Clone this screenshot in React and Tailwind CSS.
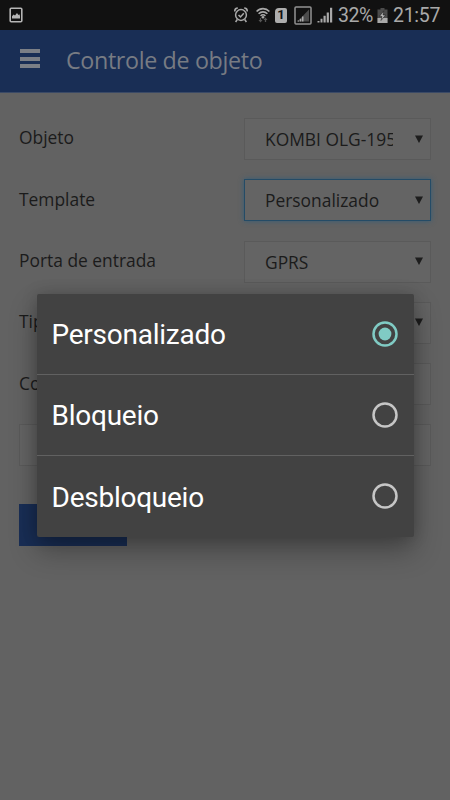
import React, { useState } from 'react';
import clsx from 'clsx';

const OPTIONS = ['Personalizado', 'Bloqueio', 'Desbloqueio'];

const StatusBar = () => (
    <header className="flex h-[30px] shrink-0 items-center bg-[#111111] pl-[9px] pr-[10px] font-['Roboto',sans-serif] text-[#a9a9a9]">
        {/* Picture notification */}
        <svg width="14" height="16" viewBox="0 0 14 16" fill="none">
            <rect x="1.2" y="1.2" width="11.6" height="13.6" rx="1" stroke="#b5b5b5" strokeWidth="1.6" />
            <path d="M3 11.5V9.2L4.6 7.4L6 8.6L8 6L9.4 8L10.4 7.2L11 9V11.5Z" fill="#b5b5b5" />
        </svg>

        <div className="ml-auto flex items-center">
            {/* Alarm */}
            <svg width="14" height="16" viewBox="0 0 14 16" fill="none" stroke="currentColor">
                <circle cx="7" cy="8" r="5.4" strokeWidth="1.5" />
                <path d="M4.5 8L6.5 9.9L9.8 6.3" strokeWidth="1.5" />
                <path d="M0.7 4.4C0.7 2.5 2 1.1 3.8 1.1M13.3 4.4C13.3 2.5 12 1.1 10.2 1.1M3.3 12.5L1.6 15M10.7 12.5L12.4 15" strokeWidth="1.5" />
            </svg>
            {/* Wifi with traffic arrows */}
            <svg className="ml-[8px]" width="14" height="16" viewBox="0 0 14 16" fill="none">
                <path d="M0.6 4.5C4.2 0.6 9.8 0.6 13.4 4.5M2.6 6.8C5.2 4.2 8.8 4.2 11.4 6.8M4.6 9C6.2 7.4 7.8 7.4 9.4 9" stroke="#a9a9a9" strokeWidth="1.6" />
                <circle cx="7" cy="10.2" r="1.3" fill="#a9a9a9" />
                <path d="M4.5 11V14M9.5 15V12" stroke="#555555" strokeWidth="1.3" />
                <path d="M2.5 13H6.5L4.5 15.5ZM7.5 13H11.5L9.5 10.5Z" fill="#555555" />
            </svg>
            {/* SIM 1 */}
            <span className="ml-[5px] flex h-[15px] w-[12px] items-center justify-center rounded-[2px] rounded-tl-[4px] bg-[#adadad] text-[13px] font-bold text-[#111111]">
                1
            </span>
            {/* First SIM signal */}
            <svg className="ml-[7px]" width="18" height="19" viewBox="0 0 18 19">
                <rect x="1" y="1" width="16" height="17" rx="1" fill="none" stroke="#929292" strokeWidth="1.5" />
                <path d="M3.5 15.5L15 3.5V15.5Z" fill="#4b4b4b" />
                <path d="M3.5 15.5V14.5H5V15.5ZM5.8 15.5V12.8H7.3V15.5ZM8 15.5V10.5H9.5V15.5Z" fill="#a9a9a9" />
            </svg>
            {/* Second SIM signal */}
            <svg className="ml-[5px]" width="16" height="16" viewBox="0 0 16 16" fill="#a9a9a9">
                <path d="M0.5 15.5V14H2.5V15.5ZM3.5 15.5V11.8H5.5V15.5ZM6.5 15.5V8.7H8.7V15.5ZM9.7 15.5V5.4H11.9V15.5ZM13 15.5V0.8H15.2V15.5Z" />
            </svg>
            <span className="ml-[5px] w-[36px] whitespace-nowrap pt-[2px] text-[19.5px] leading-none tracking-[-0.5px]">32%</span>
            {/* Battery */}
            <svg className="ml-[3px]" width="11" height="15" viewBox="0 0 11 15">
                <path d="M3.5 0H7.5V1.5H10.5V15H0.5V1.5H3.5Z" fill="#4b4b4b" />
                <path d="M0.5 10H10.5V15H0.5Z" fill="#a9a9a9" />
                <path d="M6.8 2.8L2.5 8.4H5L4 12.5L8.5 7H6Z" fill="#bababa" stroke="#111111" strokeWidth="0.5" />
            </svg>
            <span className="ml-[5px] w-[47px] whitespace-nowrap pt-[2px] text-[19.5px] leading-none tracking-[-0.3px]">21:57</span>
        </div>
    </header>
);

const SelectBox = ({ value, focused }) => (
    <div
        className={clsx(
            'flex h-[42px] w-[187px] items-center border bg-[#646464] pl-[20px] pr-[7px]',
            focused ? 'border-[#244b66] shadow-[0_0_5px_#315d78]' : 'border-[#5a5a5a]'
        )}
    >
        <span className="w-[128px] overflow-hidden whitespace-nowrap">{value}</span>
        {value !== undefined && (
            <svg className="mb-[1px] ml-auto" width="8" height="8" viewBox="0 0 8 8" fill="#1d1d1d">
                <path d="M0 0.5H8L4 8Z" />
            </svg>
        )}
    </div>
);

const Field = ({ label, value, focused }) => (
    <div className="flex items-center justify-between">
        <span className="pb-[3px]">{label}</span>
        <SelectBox value={value} focused={focused} />
    </div>
);

const Radio = ({ checked }) => (
    <svg
        width="26"
        height="26"
        viewBox="0 0 26 26"
        fill="none"
        className={checked ? 'text-[#80cbc4]' : 'text-[#c6c6c6]'}
    >
        <circle cx="13" cy="13" r="11.5" stroke="currentColor" strokeWidth="2.5" />
        {checked && <circle cx="13" cy="13" r="6.4" fill="currentColor" />}
    </svg>
);

const App = () => {
    const [template, setTemplate] = useState('Personalizado');

    return (
        <div className="relative flex h-[800px] w-[450px] flex-col overflow-hidden bg-[#626262] font-['Open_Sans',sans-serif] text-[17.4px] text-[#1b1b1b]">
            <StatusBar />

            {/* App bar */}
            <nav className="flex h-[63px] shrink-0 items-center border-b border-[#3b4a66] bg-[#192e55] pl-[20px]">
                <div className="flex flex-col gap-[3.5px] pb-[5px]">
                    <span className="h-[4px] w-[20px] bg-[#7b7f86]" />
                    <span className="h-[4px] w-[20px] bg-[#7b7f86]" />
                    <span className="h-[4px] w-[20px] bg-[#7b7f86]" />
                </div>
                <h1 className="ml-[26px] pb-px text-[23.3px] leading-none tracking-[-0.36px] text-[#777b83]">Controle de objeto</h1>
            </nav>

            <main className="flex flex-col gap-[19.3px] px-[19px] pt-[25px]">
                <Field label="Objeto" value="KOMBI OLG-1959" />
                <Field label="Template" value={template} focused />
                <Field label="Porta de entrada" value="GPRS" />
                <Field label="Tipo" value="" />
                <Field label="Comando" />
                <div className="h-[42px] border border-[#5a5a5a] bg-[#646464]" />
                <button type="button" aria-label="Enviar" className="mt-[18px] h-[42px] w-[108px] bg-[#192e55]" />
            </main>

            {/* Template picker */}
            <div className="absolute inset-x-0 bottom-0 top-[30px] flex items-center justify-center">
                <ul className="w-[377px] divide-y divide-[#616161] rounded-[2px] bg-[#424242] font-['Roboto',sans-serif] text-[28px] tracking-[-0.25px] text-white shadow-[0_14px_28px_rgba(0,0,0,0.3),0_0_16px_rgba(0,0,0,0.18)]">
                    {OPTIONS.map((option) => (
                        <li
                            key={option}
                            onClick={() => setTemplate(option)}
                            className="flex h-[81px] items-center justify-between pl-[15px] pr-[16px]"
                        >
                            <span className="pt-[3px]">{option}</span>
                            <Radio checked={option === template} />
                        </li>
                    ))}
                </ul>
            </div>
        </div>
    );
};

export default App;
